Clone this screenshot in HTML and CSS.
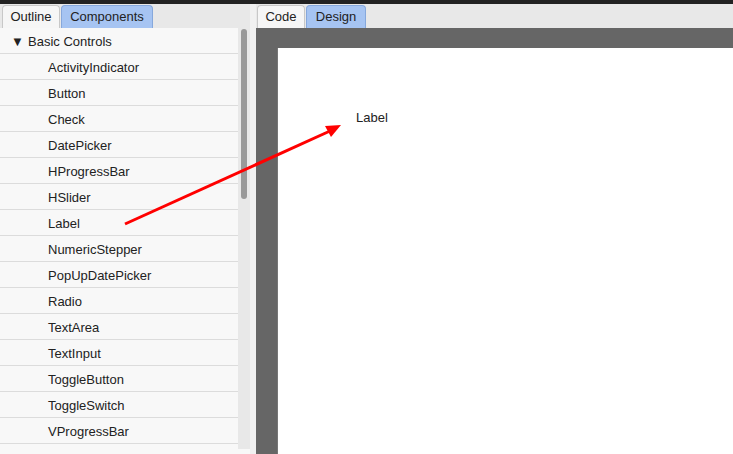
FILE: index.html
```html
<!DOCTYPE html>
<html lang="en">

<head>
  <meta charset="UTF-8" />
  <meta name="viewport" content="width=device-width, initial-scale=1.0" />
  <title>Designer</title>
  <link rel="stylesheet" href="styles.css">
</head>

<body>

  <div class="top-bar"></div>

  <div class="main">
    <!-- Left panel -->
    <div class="left-panel">
      <div class="tabs">
        <div class="tab tab-outline">Outline</div>
        <div class="tab active tab-components">Components</div>
      </div>
      <div class="outline">
        <div class="list">
          <div class="row group"><span class="caret">▼</span>Basic Controls</div>
          <div class="row">ActivityIndicator</div>
          <div class="row">Button</div>
          <div class="row">Check</div>
          <div class="row">DatePicker</div>
          <div class="row">HProgressBar</div>
          <div class="row">HSlider</div>
          <div class="row">Label</div>
          <div class="row">NumericStepper</div>
          <div class="row">PopUpDatePicker</div>
          <div class="row">Radio</div>
          <div class="row">TextArea</div>
          <div class="row">TextInput</div>
          <div class="row">ToggleButton</div>
          <div class="row">ToggleSwitch</div>
          <div class="row">VProgressBar</div>
        </div>
        <div class="scrollbar">
          <div class="thumb"></div>
        </div>
      </div>
    </div>

    <div class="splitter"></div>

    <!-- Right panel -->
    <div class="right-panel">
      <div class="tabs">
        <div class="tab tab-code">Code</div>
        <div class="tab active tab-design">Design</div>
      </div>
      <div class="stage">
        <div class="canvas">
          <span class="canvas-label">Label</span>
        </div>
      </div>
    </div>
  </div>

  <!-- drag hint arrow -->
  <svg class="arrow" width="733" height="454" viewBox="0 0 733 454">
    <line x1="125" y1="224" x2="330" y2="131" stroke="#ff0000" stroke-width="3" />
    <polygon points="341,125 325,126 331,137" fill="#ff0000" />
  </svg>

</body>

</html>
```

FILE: styles.css
```css
* {
  margin: 0;
  padding: 0;
  box-sizing: border-box;
}

html,
body {
  width: 733px;
  height: 454px;
  overflow: hidden;
  font-family: "Liberation Sans", Arial, sans-serif;
  font-size: 13px;
  color: #222;
  background-color: #f8f8f8;
}

.top-bar {
  height: 4px;
  background-color: #222;
}

.main {
  display: flex;
  height: 450px;
}

.left-panel {
  width: 250px;
  display: flex;
  flex-direction: column;
}

.tabs {
  height: 24px;
  display: flex;
  align-items: flex-end;
  gap: 1px;
  background-color: #e8e8e8;
  padding-left: 2px;
}

.tab {
  height: 23px;
  line-height: 22px;
  text-align: center;
  border: 1px solid #c8c8c8;
  border-bottom: none;
  border-radius: 4px 4px 0 0;
  background-color: #f6f6f6;
}

.tab.active {
  background-color: #a6c4f2;
  border-color: #86a8dc;
}

.tab-outline {
  width: 58px;
}

.tab-components {
  width: 92px;
}

.tab-code {
  width: 48px;
}

.tab-design {
  width: 60px;
}

.outline {
  flex: 1;
  display: flex;
  overflow: hidden;
}

.list {
  flex: 1;
  background-color: #f8f8f8;
}

.row {
  height: 26px;
  line-height: 27px;
  padding-left: 48px;
  border-bottom: 1px solid #dcdcdc;
}

.row.group {
  padding-left: 11px;
}

.caret {
  display: inline-block;
  width: 17px;
  font-size: 13px;
}

.scrollbar {
  width: 12px;
  height: 421px;
  background-color: #e8e8e8;
  padding: 1px 3px 0;
}

.thumb {
  height: 170px;
  border-radius: 3px;
  background-color: #999;
}

.splitter {
  width: 6px;
  background-color: #f1f1f1;
}

.right-panel {
  flex: 1;
  display: flex;
  flex-direction: column;
}

.right-panel .tabs {
  padding-left: 1px;
}

.stage {
  flex: 1;
  background-color: #666;
  padding: 20px 0 0 21px;
}

.canvas {
  height: 100%;
  background-color: #fff;
  border-left: 1px solid #777;
  padding: 62px 0 0 78px;
}

.canvas-label {
  font-size: 13px;
  color: #222;
}

.arrow {
  position: absolute;
  top: 0;
  left: 0;
  pointer-events: none;
}
```
